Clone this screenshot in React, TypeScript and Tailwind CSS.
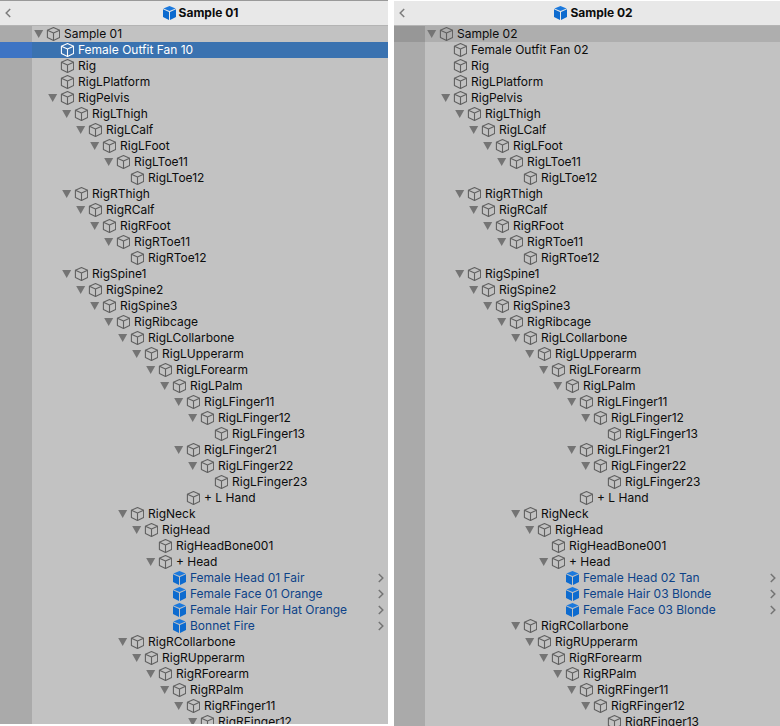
import { useState } from "react";

type Node = { depth: number; name: string; open?: boolean; prefab?: boolean };

const n = (depth: number, name: string, open = false): Node => ({ depth, name, open });
const p = (depth: number, name: string): Node => ({ depth, name, prefab: true });

const body: Node[] = [
  n(1, "Rig"),
  n(1, "RigLPlatform"),
  n(1, "RigPelvis", true),
  n(2, "RigLThigh", true),
  n(3, "RigLCalf", true),
  n(4, "RigLFoot", true),
  n(5, "RigLToe11", true),
  n(6, "RigLToe12"),
  n(2, "RigRThigh", true),
  n(3, "RigRCalf", true),
  n(4, "RigRFoot", true),
  n(5, "RigRToe11", true),
  n(6, "RigRToe12"),
  n(2, "RigSpine1", true),
  n(3, "RigSpine2", true),
  n(4, "RigSpine3", true),
  n(5, "RigRibcage", true),
  n(6, "RigLCollarbone", true),
  n(7, "RigLUpperarm", true),
  n(8, "RigLForearm", true),
  n(9, "RigLPalm", true),
  n(10, "RigLFinger11", true),
  n(11, "RigLFinger12", true),
  n(12, "RigLFinger13"),
  n(10, "RigLFinger21", true),
  n(11, "RigLFinger22", true),
  n(12, "RigLFinger23"),
  n(10, "+ L Hand"),
  n(6, "RigNeck", true),
  n(7, "RigHead", true),
  n(8, "RigHeadBone001"),
  n(8, "+ Head", true),
];

const rightArm: Node[] = [
  n(6, "RigRCollarbone", true),
  n(7, "RigRUpperarm", true),
  n(8, "RigRForearm", true),
  n(9, "RigRPalm", true),
  n(10, "RigRFinger11", true),
  n(11, "RigRFinger12", true),
];

const sample01: Node[] = [
  n(0, "Sample 01", true),
  n(1, "Female Outfit Fan 10"),
  ...body,
  p(9, "Female Head 01 Fair"),
  p(9, "Female Face 01 Orange"),
  p(9, "Female Hair For Hat Orange"),
  p(9, "Bonnet Fire"),
  ...rightArm,
];

const sample02: Node[] = [
  n(0, "Sample 02", true),
  n(1, "Female Outfit Fan 02"),
  ...body,
  p(9, "Female Head 02 Tan"),
  p(9, "Female Hair 03 Blonde"),
  p(9, "Female Face 03 Blonde"),
  ...rightArm,
  n(12, "RigRFinger13"),
];

function WireCube({ className }: { className: string }) {
  return (
    <svg viewBox="0 0 14 14" className={`h-3.5 w-3.5 shrink-0 ${className}`} fill="none" stroke="currentColor" strokeWidth="1.1" strokeLinejoin="round" aria-hidden="true">
      <path d="M7.5 .6 13.6 3.2v7.4L7.5 13.4 1.4 10.6V3.2z" />
      <path d="M1.4 3.2 7.5 6l6.1-2.8M7.5 6v7.4" />
    </svg>
  );
}

function SolidCube() {
  return (
    <svg viewBox="0 0 14 14" className="h-3.5 w-3.5 shrink-0" aria-hidden="true">
      <path d="M7.5 0 13.6 2.4 7.5 5.1 1.4 2.4z" fill="#1b79dd" />
      <path d="M1 3.2 7 5.9V14l-6-2.9z" fill="#0d6bcf" />
      <path d="M14 3.2 8 5.9V14l6-2.9z" fill="#0d6bcf" />
    </svg>
  );
}

function Chevron({ left = false }: { left?: boolean }) {
  return (
    <svg viewBox="0 0 6 10" className="h-2.5 w-1.5" fill="none" stroke="currentColor" strokeWidth="1.5" aria-hidden="true">
      <path d={left ? "M5.2 1 1.2 5l4 4" : "M.8 1l4 4-4 4"} />
    </svg>
  );
}

type PanelProps = {
  title: string;
  nodes: Node[];
  initial: number;
  focused: boolean;
  gutter: string;
  className: string;
};

function HierarchyPanel({ title, nodes, initial, focused, gutter, className }: PanelProps) {
  const [selected, setSelected] = useState(initial);
  const [closed, setClosed] = useState<number[]>([]);
  const toggle = (i: number) => setClosed((c) => (c.includes(i) ? c.filter((x) => x !== i) : [...c, i]));

  const visible: number[] = [];
  let hiddenBelow = Infinity;
  nodes.forEach((node, i) => {
    if (node.depth > hiddenBelow) return;
    hiddenBelow = closed.includes(i) ? node.depth : Infinity;
    visible.push(i);
  });

  return (
    <section className={`flex min-w-0 flex-col overflow-hidden bg-[#c2c2c2] ${className}`}>
      <header className="flex h-[25px] shrink-0 items-center border-b border-[#b4b4b4] bg-[#e8e8e8]">
        <button type="button" aria-label="Back" className="flex w-4 justify-center text-[#7c7c7c]">
          <Chevron left />
        </button>
        <h2 className="flex flex-1 items-center justify-center gap-[3px] pr-1 text-xs leading-4 font-bold">
          <SolidCube />
          {title}
        </h2>
      </header>
      <ul role="tree" aria-label={title} className="flex-1 overflow-hidden">
        {visible.map((i) => {
          const node = nodes[i];
          const active = i === selected;
          const blue = active && focused;
          const row = blue ? "bg-[#3a72b0] text-white" : active ? "bg-[#aeaeae]" : "";
          const side = blue ? "bg-[#3e74c4]" : active ? "bg-[#979797]" : "bg-[#aaaaaa]";
          return (
            <li key={i} role="treeitem" aria-selected={active} className={`flex h-4 text-xs leading-4 ${row}`} onClick={() => setSelected(i)}>
              <span className={`shrink-0 ${gutter} ${side}`} />
              <span className="shrink-0" style={{ width: node.depth * 14 }} />
              <span className="flex w-3.5 shrink-0 items-center pl-0.5">
                {node.open && (
                  <button type="button" aria-label={`Toggle ${node.name}`} onClick={() => toggle(i)} className="text-[#747474]">
                    <svg viewBox="0 0 10 8" className="h-2 w-2.5" fill="currentColor" aria-hidden="true">
                      <path d={closed.includes(i) ? "M2 0v8l6-4z" : "M.2 0h9L4.7 8z"} />
                    </svg>
                  </button>
                )}
              </span>
              <span className="flex min-w-0 flex-1 items-center gap-1">
                {node.prefab ? <SolidCube /> : <WireCube className={blue ? "text-white" : "text-[#606060]"} />}
                <span className={`whitespace-pre ${node.prefab ? "text-[#0d4288]" : ""}`}>{node.name}</span>
              </span>
              {node.prefab && (
                <button type="button" aria-label={`Open ${node.name}`} className="flex w-3.5 items-center justify-center text-[#747474]">
                  <Chevron />
                </button>
              )}
            </li>
          );
        })}
      </ul>
    </section>
  );
}

export default function App() {
  return (
    <main className="grid h-screen grid-cols-[388fr_386fr] gap-1.5 overflow-hidden bg-white font-['Inter',sans-serif] text-[#0c0c0c]">
      <HierarchyPanel title="Sample 01" nodes={sample01} initial={1} focused gutter="w-8" className="mb-0.5 border-t border-[#999999]" />
      <HierarchyPanel title="Sample 02" nodes={sample02} initial={0} focused={false} gutter="w-[31px]" className="mt-px" />
    </main>
  );
}
